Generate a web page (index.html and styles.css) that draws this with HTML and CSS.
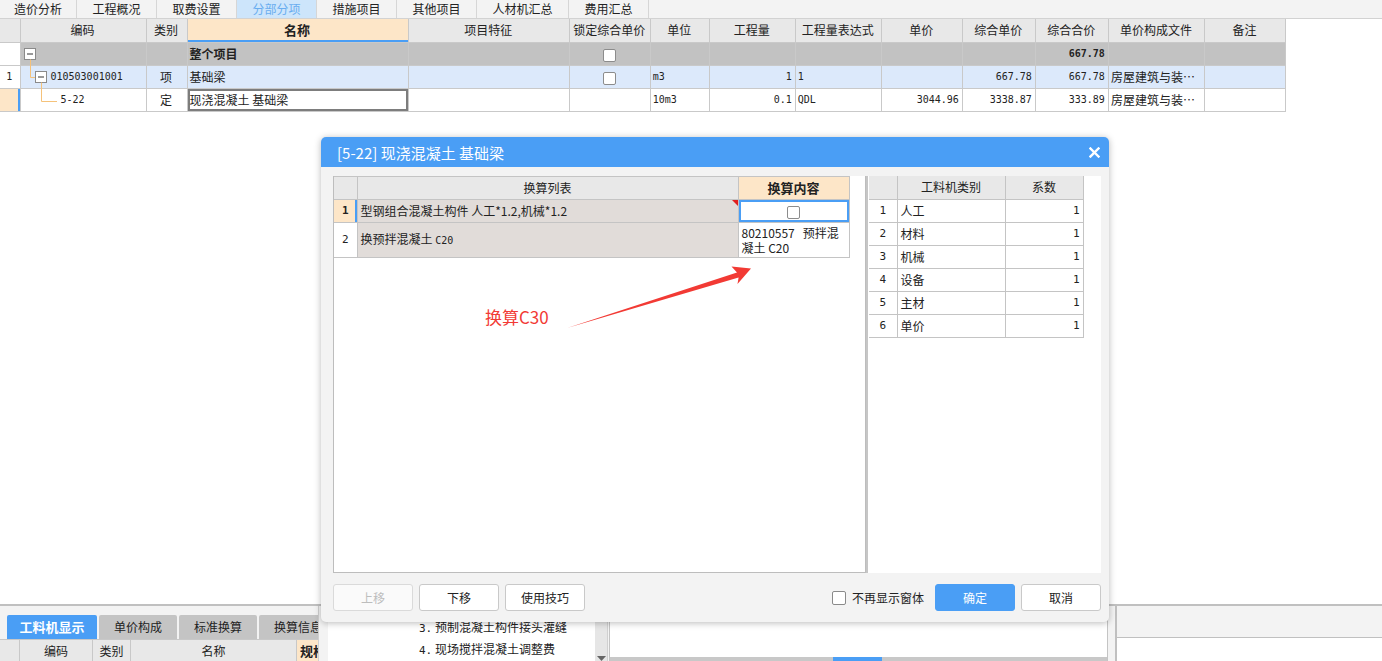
FILE: index.html
```html
<!DOCTYPE html>
<html lang="zh">
<head>
<meta charset="utf-8">
<title>分部分项</title>
<link rel="stylesheet" href="styles.css">
</head>
<body>
<div class="topbar">
  <div class="tab first">造价分析</div>
  <div class="tab">工程概况</div>
  <div class="tab">取费设置</div>
  <div class="tab active">分部分项</div>
  <div class="tab">措施项目</div>
  <div class="tab">其他项目</div>
  <div class="tab wide">人材机汇总</div>
  <div class="tab">费用汇总</div>
</div>

<table class="grid">
  <colgroup>
    <col style="width:20px"><col style="width:126px"><col style="width:41px"><col style="width:221px"><col style="width:161px"><col style="width:81px"><col style="width:59px"><col style="width:86px"><col style="width:86px"><col style="width:81px"><col style="width:73px"><col style="width:73px"><col style="width:96px"><col style="width:81px">
  </colgroup>
  <tr class="head">
    <th></th><th>编码</th><th>类别</th><th class="hl">名称</th><th>项目特征</th><th>锁定综合单价</th><th>单位</th><th>工程量</th><th>工程量表达式</th><th>单价</th><th>综合单价</th><th>综合合价</th><th>单价构成文件</th><th>备注</th>
  </tr>
  <tr class="r-all">
    <td class="num blank"></td>
    <td class="tree-cell"><div class="tree"><svg class="tv" width="28" height="22" viewBox="0 0 28 22"><rect x="3.5" y="5.5" width="11" height="11" fill="#fff" stroke="#8a8a8a"/><line x1="6" y1="11" x2="12" y2="11" stroke="#333"/><line x1="9.5" y1="16.5" x2="9.5" y2="24" stroke="#f5c27a"/></svg></div></td>
    <td></td><td class="b">整个项目</td><td></td><td class="c"><span class="cb"></span></td><td></td><td></td><td></td><td></td><td></td><td class="r mono b">667.78</td><td></td><td></td>
  </tr>
  <tr class="r-item">
    <td class="num c mono">1</td>
    <td class="tree-cell"><div class="tree"><svg class="tv" width="28" height="22" viewBox="0 0 28 22"><path d="M9.5 -2 V11.5 H14" fill="none" stroke="#f5c27a"/><rect x="14.5" y="5.5" width="11" height="11" fill="#fff" stroke="#8a8a8a"/><line x1="17" y1="11" x2="23" y2="11" stroke="#333"/><line x1="20.5" y1="16.5" x2="20.5" y2="24" stroke="#f5c27a"/></svg><span class="mono code">010503001001</span></div></td>
    <td class="c">项</td><td>基础梁</td><td></td><td class="c"><span class="cb"></span></td><td class="mono">m3</td><td class="r mono">1</td><td class="mono">1</td><td></td><td class="r mono">667.78</td><td class="r mono">667.78</td><td>房屋建筑与装…</td><td></td>
  </tr>
  <tr class="r-sub">
    <td class="num sel"></td>
    <td class="tree-cell"><div class="tree"><svg class="tv" width="38" height="22" viewBox="0 0 38 22"><path d="M20.5 -2 V12.5 H36" fill="none" stroke="#f5c27a"/></svg><span class="mono code">5-22</span></div></td>
    <td class="c">定</td><td class="edit">现浇混凝土 基础梁</td><td></td><td></td><td class="mono">10m3</td><td class="r mono">0.1</td><td class="mono">QDL</td><td class="r mono">3044.96</td><td class="r mono">3338.87</td><td class="r mono">333.89</td><td>房屋建筑与装…</td><td></td>
  </tr>
</table>

<div class="spacer"></div>

<div class="bottom">
  <div class="bleft">
    <div class="btabs">
      <div class="btab on">工料机显示</div>
      <div class="btab">单价构成</div>
      <div class="btab">标准换算</div>
      <div class="btab">换算信息</div>
    </div>
    <div class="bhead">
      <div class="w20"></div><div class="w73">编码</div><div class="w38">类别</div><div class="w166">名称</div><div class="spec">规格</div>
    </div>
  </div>
  <div class="bmid">
    <div class="list">
      <div class="li"><span class="mono">3.</span> 预制混凝土构件接头灌缝</div>
      <div class="li"><span class="mono">4.</span> 现场搅拌混凝土调整费</div>
    </div>
    <div class="vscroll"><svg width="9" height="5" viewBox="0 0 9 5"><path d="M0 0 H9 L4.5 5 Z" fill="#666"/></svg></div>
  </div>
  <div class="bright">
    <div class="bfill"></div>
    <div class="hbar"><div class="thumb"></div></div>
  </div>
  <div class="bgap"></div>
  <div class="bfar"><div class="bfar-top"></div></div>
</div>

<div class="dlg">
  <div class="dlg-title">
    <span>[5-22] 现浇混凝土 基础梁</span>
    <svg class="close" width="11" height="11" viewBox="0 0 11 11"><path d="M1.5 1.5 L9.5 9.5 M9.5 1.5 L1.5 9.5" stroke="#fff" stroke-width="2.4" stroke-linecap="square"/></svg>
  </div>
  <div class="dlg-body">
    <div class="panes">
      <div class="lpane">
        <table class="ltbl">
          <colgroup><col style="width:23px"><col style="width:381px"><col style="width:111px"></colgroup>
          <tr class="lhead"><th></th><th>换算列表</th><th class="hl2">换算内容</th></tr>
          <tr class="lr1"><td class="n sel2">1</td><td class="t mark">型钢组合混凝土构件 人工*1.2,机械*1.2</td><td class="v focus"><span class="cb"></span></td></tr>
          <tr class="lr2"><td class="n">2</td><td class="t">换预拌混凝土 <span class="mono">C20</span></td><td class="v wrap">80210557&nbsp;&nbsp; 预拌混凝土 C20</td></tr>
        </table>
      </div>
      <div class="rpane">
        <table class="rtbl">
          <colgroup><col style="width:28px"><col style="width:108px"><col style="width:78px"></colgroup>
          <tr class="rhead"><th></th><th>工料机类别</th><th>系数</th></tr>
          <tr><td class="c mono">1</td><td>人工</td><td class="r mono">1</td></tr>
          <tr><td class="c mono">2</td><td>材料</td><td class="r mono">1</td></tr>
          <tr><td class="c mono">3</td><td>机械</td><td class="r mono">1</td></tr>
          <tr><td class="c mono">4</td><td>设备</td><td class="r mono">1</td></tr>
          <tr><td class="c mono">5</td><td>主材</td><td class="r mono">1</td></tr>
          <tr><td class="c mono">6</td><td>单价</td><td class="r mono">1</td></tr>
        </table>
      </div>
    </div>
    <div class="actions">
      <div class="btn dis">上移</div>
      <div class="btn">下移</div>
      <div class="btn">使用技巧</div>
      <div class="grow"></div>
      <div class="chk"><span class="box"></span><span>不再显示窗体</span></div>
      <div class="btn primary">确定</div>
      <div class="btn">取消</div>
    </div>
  </div>
</div>

<div class="note">换算C30</div>
<svg class="arrow" width="200" height="80" viewBox="560 260 200 80"><polygon points="567,328 737,272.4 731.5,266.5 751,268.5 737.5,284 738.6,277.4" fill="#f23a34"/></svg>
</body>
</html>
```

FILE: styles.css
```css
* { box-sizing: border-box; }
html, body { margin: 0; padding: 0; }
body {
  width: 1382px;
  height: 661px;
  overflow: hidden;
  position: relative;
  display: flex;
  flex-direction: column;
  background: #fff;
  color: #222;
  font-family: "Noto Sans CJK SC", "Microsoft YaHei", sans-serif;
  font-size: 12px;
}
.mono { font-family: "DejaVu Sans Mono", "Liberation Mono", monospace; font-size: 10px; }
.b { font-weight: bold; }
.c { text-align: center; }
.r { text-align: right; }

/* top tabs */
.topbar {
  flex: none;
  height: 19px;
  display: flex;
  background: #f3f3f3;
  border-bottom: 1px solid #d2d2d2;
}
.tab {
  width: 80px;
  border-right: 1px solid #d6d6d6;
  text-align: center;
  line-height: 17px;
  font-size: 12px;
  color: #222;
}
.tab.first { width: 77px; }
.tab.wide { width: 92px; }
.tab.active { background: #cde5fb; color: #69adf0; }

/* main grid */
.grid {
  flex: none;
  border-collapse: collapse;
  table-layout: fixed;
  width: 1286px;
}
.grid th, .grid td {
  border: 1px solid #c9c9c9;
  height: 23px;
  padding: 0 3px 0 2px;
  white-space: nowrap;
  overflow: hidden;
  font-weight: normal;
  line-height: 20px;
}
.grid th:first-child, .grid td:first-child { border-left: none; }
.grid .head th { background: #e8e8e8; text-align: center; border-top: none; color: #222; }
.grid .head th.hl { background: #fde6c8; font-weight: bold; font-size: 13px; box-shadow: inset 0 -2px 0 #4a9ef5; }
.grid td.b { font-weight: bold; }
.r-all td { background: #c2c2c2; }
.r-all td.blank { background: #fff; }
.r-item td { background: #dce9fb; }
.r-item td.num { background: #fff; }
.r-sub td { background: #fff; }
.r-sub td.sel { background: #fde6c8; box-shadow: inset -2px 0 0 #4a9ef5; }
.r-sub td.edit { box-shadow: inset 0 0 0 2px #7d7d7d; }
.grid td.tree-cell { padding: 0; overflow: visible; }
.tree { display: flex; align-items: center; height: 22px; }
.tv { flex: none; overflow: visible; display: block; }
.code { margin-left: 2px; }
.cb {
  display: inline-block;
  width: 13px;
  height: 13px;
  border: 1px solid #8c8c8c;
  border-radius: 2px;
  background: #fff;
  vertical-align: middle;
}

.spacer { flex: 1; }

/* bottom area */
.bottom {
  flex: none;
  height: 57px;
  display: flex;
  background: #f3f3f3;
  border-top: 2px solid #c0c0c0;
}
.bleft { width: 318px; flex: none; overflow: hidden; padding-top: 9px; }
.btabs { display: flex; height: 24px; padding-left: 7px; gap: 2px; }
.btab {
  flex: none;
  width: 78px;
  background: #c4c4c4;
  border-radius: 2px 2px 0 0;
  text-align: center;
  line-height: 24px;
  font-size: 12px;
  color: #222;
}
.btab.on { width: 90px; background: #4a9ef5; color: #fff; font-weight: bold; font-size: 13px; }
.bhead { display: flex; height: 22px; background: #e8e8e8; border-top: 1px solid #c8c8c8; }
.bhead div { flex: none; border-right: 1px solid #c8c8c8; text-align: center; line-height: 21px; font-size: 12px; }
.bhead .w20 { width: 20px; }
.bhead .w73 { width: 73px; }
.bhead .w38 { width: 38px; }
.bhead .w166 { width: 166px; }
.bhead .spec { width: 60px; background: #fde6c8; font-weight: bold; font-size: 13px; text-align: left; padding-left: 3px; }

.bmid { width: 291px; flex: none; display: flex; padding-left: 9px; border-left: 1px solid #d0d0d0; }
.list { width: 267px; background: #fff; padding: 11px 0 0 91px; }
.li { line-height: 20px; font-size: 12px; white-space: nowrap; }
.li .mono { font-size: 11px; }
.vscroll {
  width: 13px;
  background: #e6e6e6;
  display: flex;
  align-items: flex-end;
  justify-content: center;
  border-right: 1px solid #d0d0d0;
}
.bright { width: 499px; flex: none; display: flex; flex-direction: column; background: #fff; border-left: 1px solid #c4c4c4; border-right: 1px solid #c4c4c4; }
.bfill { flex: 1; }
.hbar { height: 4px; background: #c8c8c8; }
.thumb { margin-left: 223px; width: 49px; height: 4px; background: #4a9ef5; }
.bgap { width: 7px; flex: none; }
.bfar { flex: 1; border-left: 2px solid #c0c0c0; background: #fff; }
.bfar-top { height: 32px; background: #f3f3f3; border-bottom: 1px solid #c0c0c0; }

/* dialog */
.dlg {
  position: absolute;
  left: 321px;
  top: 137px;
  width: 788px;
  height: 485px;
  background: #f3f3f3;
  border-radius: 5px;
  box-shadow: 0 1px 7px rgba(0, 0, 0, 0.28);
  overflow: hidden;
}
.dlg-title {
  height: 30px;
  background: #4a9ef5;
  color: #fff;
  font-size: 15px;
  display: flex;
  align-items: center;
  justify-content: space-between;
  padding: 0 9px 0 16px;
}
.close { display: block; }
.dlg-body { padding: 9px 8px 10px 12px; }
.panes { display: flex; height: 397px; }
.lpane { width: 533px; flex: none; background: #fff; border: 1px solid #bdbdbd; border-top: none; }
.rpane { width: 235px; flex: none; background: #fff; border-left: 2px solid #c6c6c6; }

.ltbl, .rtbl { border-collapse: collapse; table-layout: fixed; }
.ltbl { width: 515px; }
.rtbl { width: 214px; margin-left: 1px; }
.ltbl th, .ltbl td, .rtbl th, .rtbl td {
  border: 1px solid #c4c4c4;
  height: 23px;
  padding: 0 3px;
  font-weight: normal;
  white-space: nowrap;
  overflow: hidden;
  line-height: 20px;
}
.ltbl th { background: #e8e8e8; text-align: center; border-top: 1px solid #c4c4c4; }
.ltbl tr th:first-child, .ltbl tr td:first-child { border-left: none; }
.ltbl th.hl2 { background: #fde6c8; font-weight: bold; font-size: 13px; }
.ltbl td.n { text-align: center; background: #fff; font-family: "DejaVu Sans Mono", monospace; font-size: 11px; }
.ltbl td.sel2 { background: #fde6c8; font-weight: bold; box-shadow: inset -2px 0 0 #4a9ef5; }
.ltbl td.t { background: #e1dcd9; }
.ltbl td.mark { position: relative; }
.ltbl td.mark::after {
  content: "";
  position: absolute;
  right: 0;
  top: 0;
  border-top: 6px solid #e02020;
  border-left: 6px solid transparent;
}
.ltbl td.v { background: #fff; }
.ltbl td.focus { text-align: center; box-shadow: inset 0 0 0 2px #4a9ef5; }
.ltbl tr.lr2 td { height: 35px; }
.ltbl td.wrap {
  white-space: normal;
  word-break: break-all;
  line-height: 15px;
  padding: 2px 3px;
  vertical-align: middle;
}
.rtbl th { background: #e8e8e8; text-align: center; border-top: none; }
.rtbl tr th:first-child, .rtbl tr td:first-child { border-left: none; }
.rtbl td.c { text-align: center; font-size: 11px; }
.rtbl td.r { text-align: right; font-size: 11px; }

.actions { display: flex; align-items: center; margin-top: 11px; height: 27px; gap: 6px; }
.btn {
  flex: none;
  width: 80px;
  height: 27px;
  border: 1px solid #c9c9c9;
  border-radius: 3px;
  background: #fff;
  text-align: center;
  line-height: 25px;
  font-size: 12px;
  color: #222;
}
.btn.dis { color: #bdbdbd; border-color: #dadada; background: #fafafa; }
.btn.primary { background: #4a9ef5; border-color: #4a9ef5; color: #fff; }
.grow { flex: 1; }
.chk { display: flex; align-items: center; gap: 6px; margin-right: 5px; font-size: 12px; }
.chk .box { width: 14px; height: 14px; border: 1px solid #8a8a8a; border-radius: 2px; background: #fff; }

/* annotation */
.note {
  position: absolute;
  left: 485px;
  top: 305px;
  color: #f23a34;
  font-size: 17px;
  line-height: 24px;
}
.arrow { position: absolute; left: 560px; top: 260px; }
```
